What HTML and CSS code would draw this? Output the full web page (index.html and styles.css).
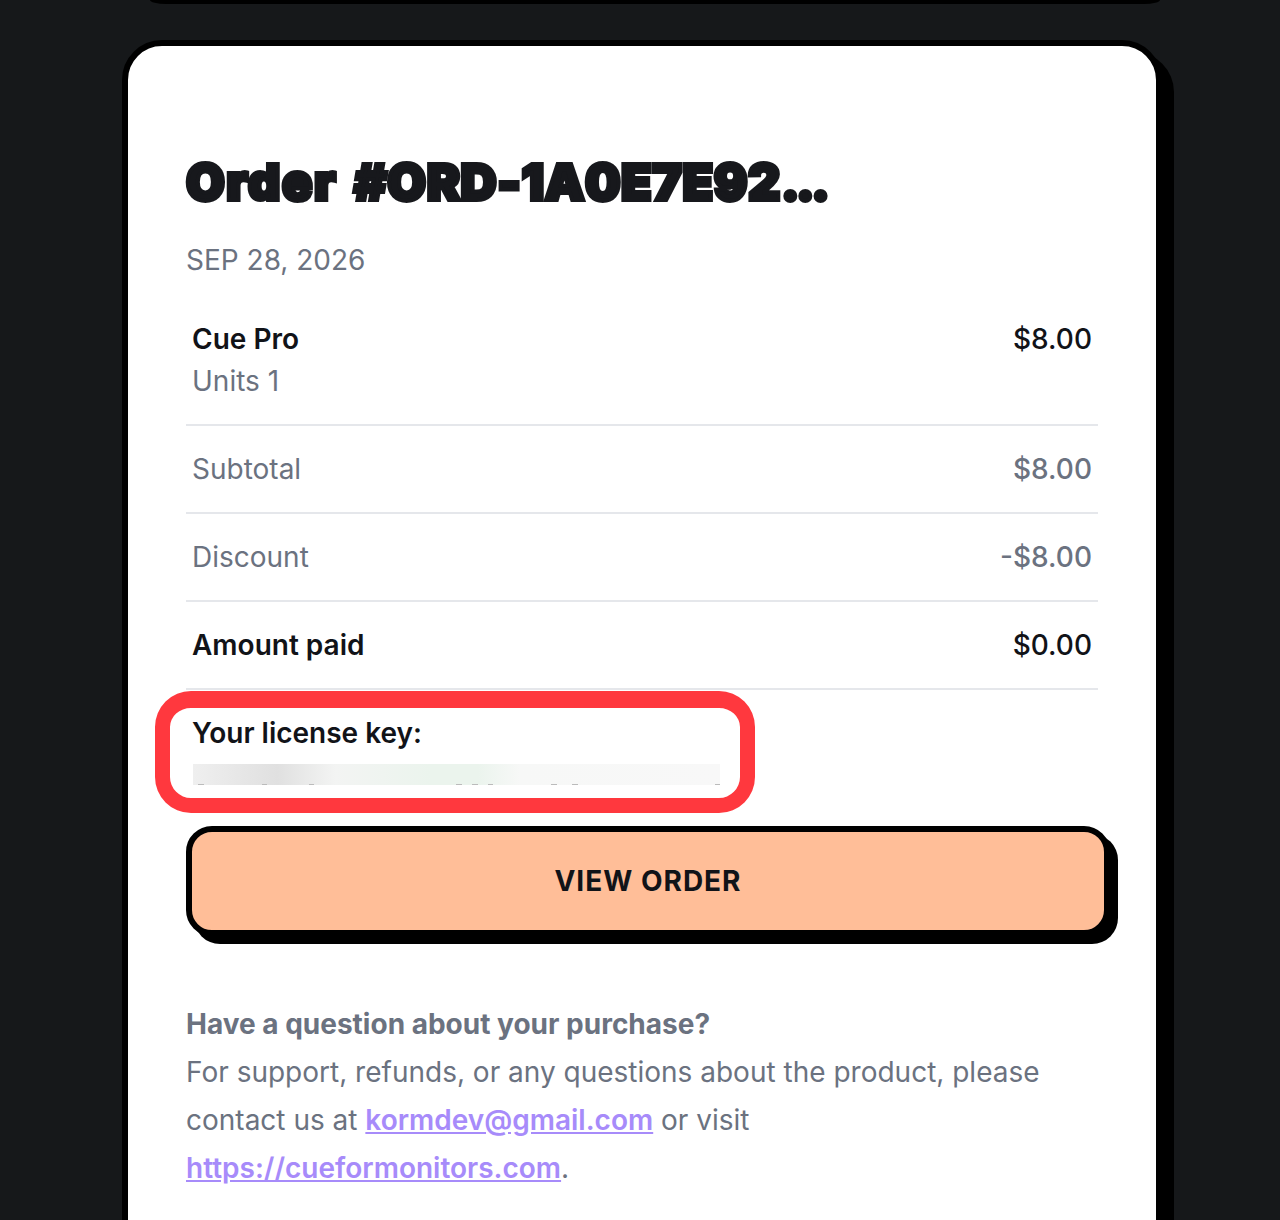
FILE: index.html
```
<!DOCTYPE html>
<html lang="en">
<head>
<meta charset="utf-8">
<title>Order receipt</title>
<link rel="stylesheet" href="styles.css">
</head>
<body>
<div class="prev-card"></div>
<main class="card">
  <h1 class="title"><span class="title-word">Order</span> #ORD-1A0E7E92<span class="title-dots">...</span></h1>
  <p class="date">SEP 28, 2026</p>
  <div class="row row-item">
    <div class="cell">
      <div class="strong">Cue Pro</div>
      <div class="muted">Units 1</div>
    </div>
    <div class="cell price">$8.00</div>
  </div>
  <div class="row muted"><div class="cell">Subtotal</div><div class="cell price">$8.00</div></div>
  <div class="row muted"><div class="cell">Discount</div><div class="cell price">-$8.00</div></div>
  <div class="row strong"><div class="cell">Amount paid</div><div class="cell price">$0.00</div></div>
  <section class="license">
    <div class="license-label">Your license key:</div>
    <div class="license-key"></div>
    <div class="highlight"></div>
  </section>
  <a class="button" href="#">VIEW ORDER</a>
  <p class="support">
    <strong>Have a question about your purchase?</strong><br>
    For support, refunds, or any questions about the product, please contact us at <a href="#">kormdev@gmail.com</a> or visit <a href="#">https://cueformonitors.com</a>.
  </p>
</main>
</body>
</html>
```
FILE: styles.css
```
html, body {
  margin: 0;
  height: 1220px;
  overflow: hidden;
}
body {
  background: #16181a;
  font-family: Inter, "Liberation Sans", sans-serif;
  font-size: 28px;
  color: #111318;
}
.prev-card {
  height: 4px;
  margin: 0 120px 0 150px;
  background: #000;
  border-radius: 0 0 16px 16px / 0 0 4px 4px;
}
.card {
  margin: 36px 0 0 122px;
  padding: 112px 58px 100px;
  width: 912px;
  background: #fff;
  border: 6px solid #000;
  border-radius: 40px;
  box-shadow: 12px 12px 0 #000;
}
.title {
  margin: 0;
  font-size: 50px;
  line-height: 48px;
  font-weight: 900;
  letter-spacing: 0.55px;
  word-spacing: 6px;
  color: #17181c;
  -webkit-text-stroke: 4px #17181c;
}
.title-word { letter-spacing: 1.6px; }
.title-dots { letter-spacing: -3.5px; }
.date {
  margin: 34px 0 0;
  line-height: 40px;
  color: #6b7280;
}
.row {
  display: flex;
  justify-content: space-between;
  padding: 22px 6px;
  line-height: 42px;
  border-bottom: 2px solid #e5e7eb;
}
.row-item {
  padding: 38px 6px 22px;
}
.price {
  text-align: right;
  font-weight: 500;
}
.strong { font-weight: 600; color: #111318; }
.muted { color: #6b7280; }
.license {
  position: relative;
  padding: 21px 6px 0;
  height: 119px;
  box-sizing: border-box;
}
.license-label {
  font-weight: 600;
  line-height: 44px;
}
.license-key {
  width: 527px;
  height: 21px;
  margin: 9px 0 0 1px;
  background:
    linear-gradient(90deg, transparent 1%, #bbb 1%, #bbb 2%, transparent 2%, transparent 13%, #bbb 13%, #bbb 14%, transparent 14%, transparent 22%, #bbb 22%, #bbb 23%, transparent 23%, transparent 50%, #bbb 50%, #bbb 51%, transparent 51%, transparent 53%, #bbb 53%, #bbb 54%, transparent 54%, transparent 56%, #bbb 56%, #bbb 57%, transparent 57%, transparent 68%, #bbb 68%, #bbb 69%, transparent 69%, transparent 72%, #bbb 72%, #bbb 73%, transparent 73%, transparent 99%, #bbb 99%) bottom / 100% 1px no-repeat,
    linear-gradient(90deg, #efefef 0, #e0e0e0 16%, #f3f4f3 27%, #ebf4ed 45%, #ebf4ed 54%, #f7f8f7 62%, #f8f8f8 100%);
}
.highlight {
  position: absolute;
  left: -31px;
  top: 1px;
  width: 600px;
  height: 122px;
  box-sizing: border-box;
  border: 15px solid #ff383e;
  border-top-width: 17px;
  border-radius: 36px;
}
.button {
  display: block;
  width: 100%;
  margin-top: 17px;
  height: 98px;
  line-height: 98px;
  border: 6px solid #000;
  border-radius: 26px;
  background: #ffbe98;
  box-shadow: 8px 8px 0 #000;
  text-align: center;
  font-weight: 700;
  letter-spacing: 1px;
  color: #111318;
  text-decoration: none;
}
.support {
  margin: 64px 0 0;
  line-height: 48px;
  color: #6b7280;
}
.support strong { font-weight: 700; }
.support a {
  color: #a78bfa;
  font-weight: 600;
}
```
